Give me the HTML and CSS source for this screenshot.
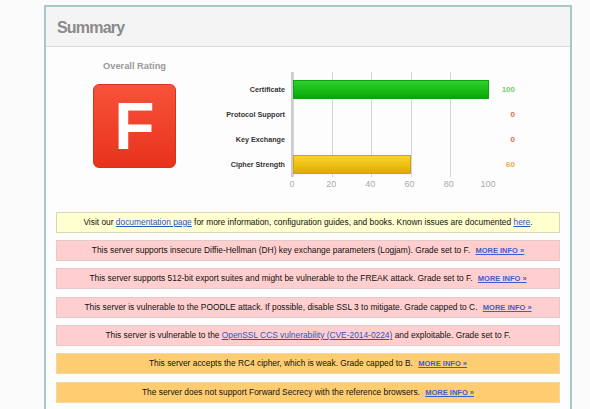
FILE: index.html
```html
<!DOCTYPE html>
<html>
<head>
<meta charset="utf-8">
<link rel="stylesheet" href="styles.css">
</head>
<body>
<div class="panel">
  <div class="panel-head">Summary</div>
  <div class="panel-body">
    <div class="rating">
      <div class="grade-col">
        <div class="grade-title">Overall Rating</div>
        <div class="grade">F</div>
      </div>
      <div class="chart">
        <div class="labels">
          <div class="row">Certificate</div>
          <div class="row">Protocol Support</div>
          <div class="row">Key Exchange</div>
          <div class="row">Cipher Strength</div>
        </div>
        <div class="plot-col">
          <div class="plot">
            <div class="row"><div class="bar green" style="width:100%"></div></div>
            <div class="row"></div>
            <div class="row"></div>
            <div class="row"><div class="bar yellow" style="width:60%"></div></div>
          </div>
          <div class="axis">
            <span>0</span><span>20</span><span>40</span><span>60</span><span>80</span><span>100</span>
          </div>
        </div>
        <div class="values">
          <div class="row v-green">100</div>
          <div class="row v-red">0</div>
          <div class="row v-red">0</div>
          <div class="row v-orange">60</div>
        </div>
      </div>
    </div>
    <div class="messages">
      <div class="msg info">Visit our <a href="#">documentation page</a> for more information, configuration guides, and books. Known issues are documented <a href="#">here</a>.</div>
      <div class="msg warn">This server supports insecure Diffie-Hellman (DH) key exchange parameters (Logjam). Grade set to F. <a class="more" href="#">MORE INFO »</a></div>
      <div class="msg warn">This server supports 512-bit export suites and might be vulnerable to the FREAK attack. Grade set to F. <a class="more" href="#">MORE INFO »</a></div>
      <div class="msg warn">This server is vulnerable to the POODLE attack. If possible, disable SSL 3 to mitigate. Grade capped to C. <a class="more" href="#">MORE INFO »</a></div>
      <div class="msg warn">This server is vulnerable to the <a href="#">OpenSSL CCS vulnerability (CVE-2014-0224)</a> and exploitable. Grade set to F.</div>
      <div class="msg notice">This server accepts the RC4 cipher, which is weak. Grade capped to B. <a class="more" href="#">MORE INFO »</a></div>
      <div class="msg notice">The server does not support Forward Secrecy with the reference browsers. <a class="more" href="#">MORE INFO »</a></div>
      <div class="msg notice">&nbsp;</div>
    </div>
  </div>
</div>
</body>
</html>
```
FILE: styles.css
```css
html, body {
  margin: 0;
  padding: 0;
}
body {
  background: #fbfbfb;
  font-family: "Liberation Sans", Arial, sans-serif;
  color: #222;
  overflow: hidden;
}
.panel {
  margin: 5px 0 0 44px;
  width: 524px;
  border: 2px solid #a9c6c8;
  background: #fdfdfd;
}
.panel-head {
  height: 40px;
  box-sizing: border-box;
  background: #f4f4f4;
  border-bottom: 1px solid #d9d9d9;
  padding: 11px 0 0 11px;
  font-size: 16px;
  letter-spacing: -0.8px;
  font-weight: bold;
  color: #8a8a8a;
  line-height: 19px;
}
.panel-body {
  padding: 0 10px;
}
.rating {
  display: flex;
  height: 164.5px;
}
.grade-col {
  width: 157px;
  display: flex;
  flex-direction: column;
  align-items: center;
  padding-top: 14px;
}
.grade-title {
  font-size: 9.3px;
  font-weight: bold;
  color: #999;
  line-height: 11px;
}
.grade {
  margin-top: 12px;
  width: 81px;
  height: 82px;
  border: 1px solid #d0361c;
  border-radius: 6px;
  background: linear-gradient(#f7533a, #e8321c);
  color: #fff;
  font-size: 66px;
  font-weight: bold;
  line-height: 82px;
  text-align: center;
}
.chart {
  display: flex;
  padding-top: 25px;
}
.labels {
  width: 72px;
  padding-top: 5px;
  text-align: right;
  font-size: 7.2px;
  font-weight: bold;
  color: #333;
}
.row {
  height: 25px;
  line-height: 25px;
}
.plot-col {
  margin-left: 7px;
  width: 197px;
}
.plot {
  padding: 5px 0 0;
  height: 100px;
  border-left: 2px solid #ccc;
  margin-left: -1px;
  background: repeating-linear-gradient(to right, transparent 0 38.2px, #d6d6d6 38.2px 39.2px);
  background-position: 1px 0;
}
.plot .row {
  display: flex;
  align-items: center;
}
.bar {
  height: 19px;
  box-sizing: border-box;
}
.green {
  background: linear-gradient(#2ed12e, #06a806);
  border: 1px solid #11a011;
}
.yellow {
  background: linear-gradient(#fcd42c, #e0ac00);
  border: 1px solid #d3a500;
}
.axis {
  display: flex;
  justify-content: space-between;
  width: 216px;
  margin: 1px 0 0 -10px;
  font-size: 9px;
  color: #aaa;
  line-height: 12px;
}
.axis span {
  width: 20px;
  text-align: center;
}
.values {
  width: 26px;
  padding-top: 5px;
  text-align: right;
  font-size: 8px;
  font-weight: bold;
}
.v-green { color: #7ccb6f; }
.v-red { color: #e26a55; }
.v-orange { color: #f3a544; }
.messages {
  display: flex;
  flex-direction: column;
  gap: 7.4px;
}
.msg {
  height: 21px;
  box-sizing: border-box;
  border: 1px solid #d6d6d6;
  line-height: 19px;
  text-align: center;
  font-size: 8.4px;
  color: #111;
  white-space: nowrap;
}
.msg a {
  color: #2a55c0;
}
.msg a.more {
  font-size: 7.5px;
  font-weight: bold;
  margin-left: 3px;
  color: #3a5fd0;
}
.info {
  background: #ffffcf;
  border-color: #d9d6b8;
}
.warn {
  background: #ffcfcf;
  border-color: #e3c9c9;
}
.notice {
  background: #fecd72;
  border-color: #f0d7a8;
}
```
